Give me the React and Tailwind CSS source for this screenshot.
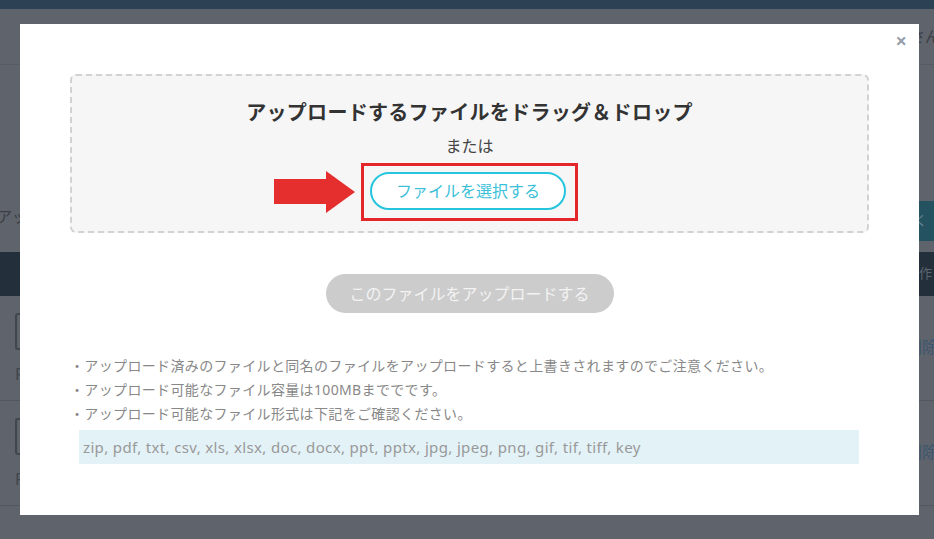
import React from "react";

const NOTES = [
  "アップロード済みのファイルと同名のファイルをアップロードすると上書きされますのでご注意ください。",
  "アップロード可能なファイル容量は100MBまででです。",
  "アップロード可能なファイル形式は下記をご確認ください。",
];

const EXTENSIONS =
  "zip, pdf, txt, csv, xls, xlsx, doc, docx, ppt, pptx, jpg, jpeg, png, gif, tif, tiff, key";

function BackgroundRow() {
  return (
    <div className="h-[105px] border-b border-[#53575e] pl-[15px] pt-[17px] flex justify-between">
      <div className="flex flex-col">
        <div className="w-[40px] h-[37px] rounded-[3px] border-2 border-[#41454c]" />
        <span className="mt-[14px] text-[16px] leading-[20px] text-[#41454c]">File</span>
      </div>
      <span className="mt-[22px] mr-[-4px] text-[16px] text-[#3c5670]">削除</span>
    </div>
  );
}

export default function App() {
  return (
    <div className="relative w-[934px] h-[539px] overflow-hidden bg-[#5f636b] font-['Noto_Sans','Noto_Sans_CJK_JP',sans-serif]">
      {/* 背景ページ */}
      <div className="h-[9px] bg-[#2d4154]" />
      <header className="h-[56px] border-b border-[#575b62] flex items-center justify-end">
        <span className="mr-[-6px] text-[15px] text-[#3a3d44]">様さん</span>
      </header>
      <section className="h-[187px] flex items-end justify-between pb-[11px]">
        <span className="ml-[-3px] mb-[14px] text-[15px] text-[#3a3d44]">アップロード</span>
        <div className="w-[40px] h-[40px] bg-[#255261] rounded-l-[4px] flex items-center pl-[20px] text-[13px] text-[#6b8a95]">く</div>
      </section>
      <div className="h-[44px] bg-[#232f3a] flex items-center justify-end pr-[2px] text-[13px] text-[#5c6670]">
        操作
      </div>
      <BackgroundRow />
      <BackgroundRow />

      {/* モーダル */}
      <div className="absolute left-[20px] top-[24px] w-[899px] h-[491px] bg-white px-[50px] pt-[50px]">
        <button className="absolute right-[12px] top-[5px] text-[20px] font-bold leading-[24px] text-[#95a0ab]">
          ×
        </button>

        <div className="h-[159px] rounded-[6px] border-2 border-dashed border-[#d2d2d2] bg-[#f6f6f6] flex flex-col items-center pt-[23px]">
          <h2 className="text-[20px] font-bold leading-[28px] tracking-[0.3px] text-[#333]">
            アップロードするファイルをドラッグ＆ドロップ
          </h2>
          <p className="mt-[7px] text-[16px] leading-[24px] text-[#444]">または</p>
          <div className="relative mt-[5px] border-[3px] border-[#e3262a] pl-[6px] pr-[9px] pt-[6px] pb-[8px]">
            <svg
              className="absolute right-full top-[5px] mr-[8px]"
              width="82"
              height="42"
              viewBox="0 0 82 42"
            >
              <polygon points="0,8 52,8 52,0 81,21 52,42 52,33 0,33" fill="#e52e2e" />
            </svg>
            <button className="w-[196px] h-[38px] rounded-full border-2 border-[#25c6dd] bg-white text-[16px] text-[#3cbfd8]">
              ファイルを選択する
            </button>
          </div>
        </div>

        <div className="mt-[41px] flex justify-center">
          <button className="w-[288px] h-[39px] rounded-full bg-[#cccccc] text-[16px] text-[#f3f3f3]">
            このファイルをアップロードする
          </button>
        </div>

        <ul className="mt-[41px] text-[14px] leading-[24px] tracking-[0.35px] text-[#888]">
          {NOTES.map((n) => (
            <li key={n}>・{n}</li>
          ))}
        </ul>
        <div className="mt-[4px] ml-[9px] mr-[10px] h-[34px] bg-[#e3f2f7] px-[4px] flex items-center text-[15px] tracking-[0.35px] text-[#999]">
          {EXTENSIONS}
        </div>
      </div>
    </div>
  );
}
